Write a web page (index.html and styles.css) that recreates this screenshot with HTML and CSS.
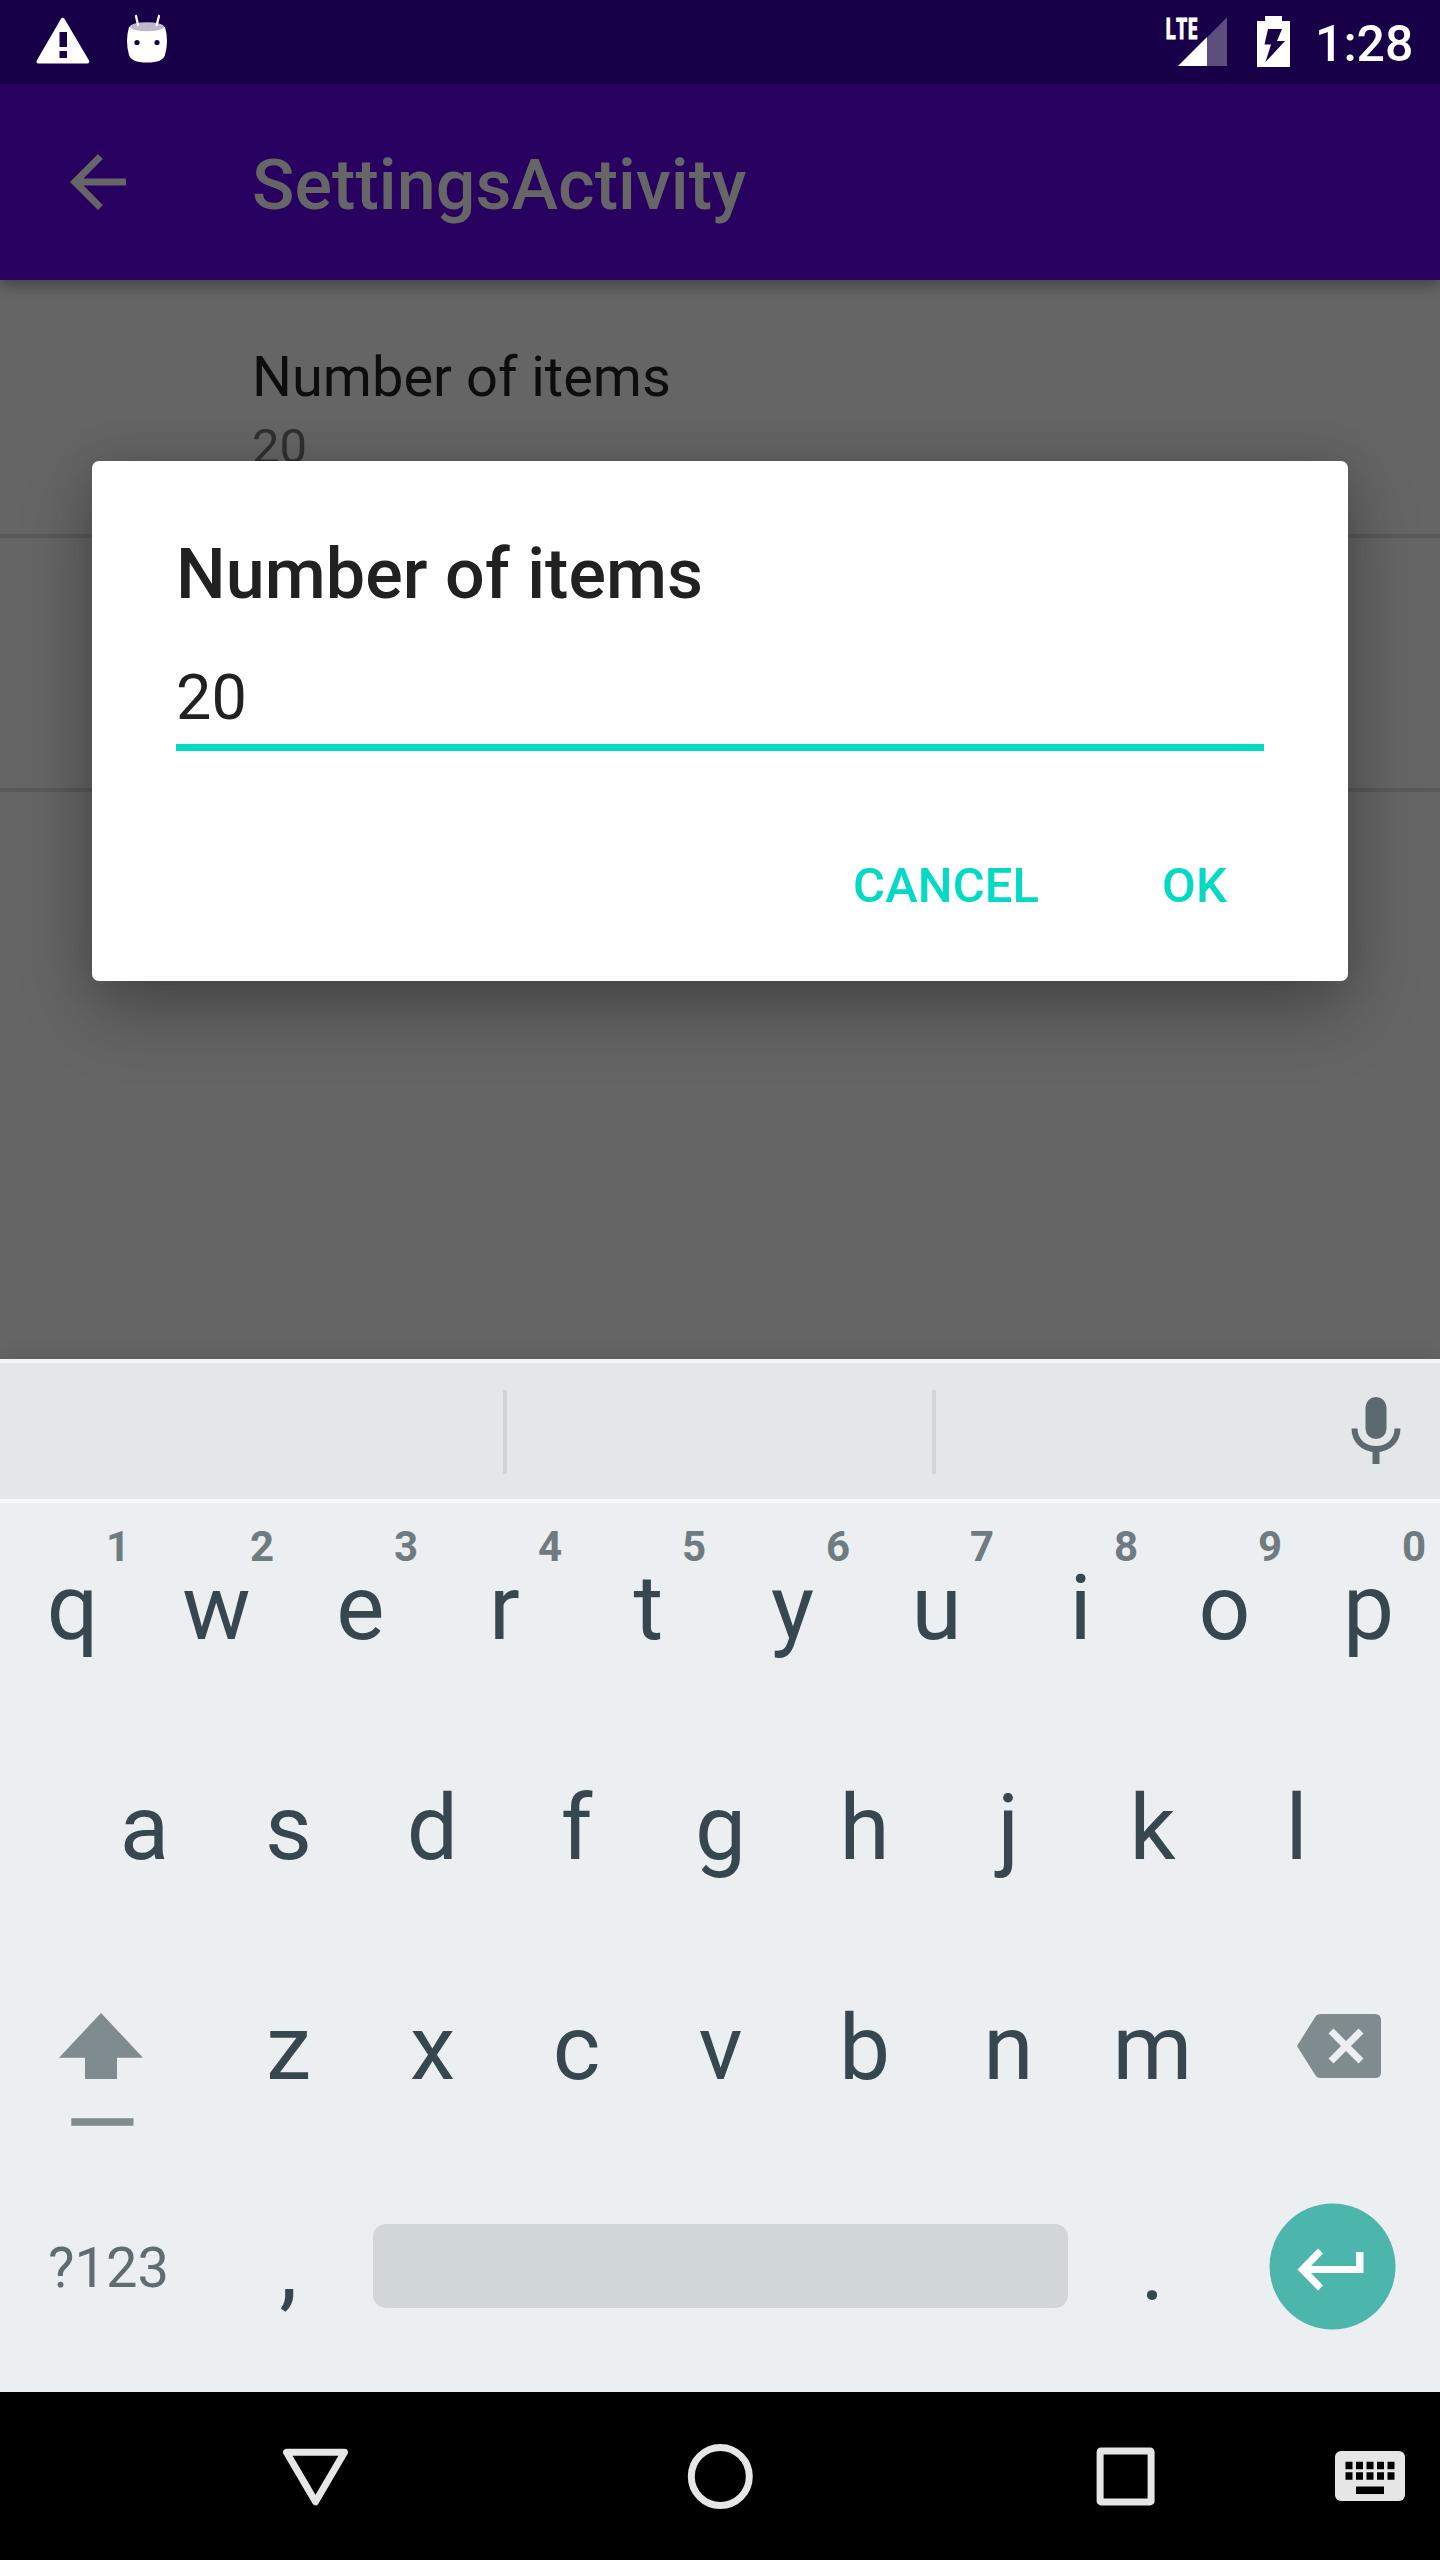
FILE: index.html
```
<!DOCTYPE html>
<html lang="en">
<head>
<meta charset="utf-8">
<title>SettingsActivity</title>
<link rel="stylesheet" href="styles.css">
</head>
<body>
<div class="screen">
  <header class="status">
    <div class="status-side">
      <svg class="warning" width="54" height="48" viewBox="0 0 54 48"><path fill="#fff" stroke="#fff" stroke-width="4" stroke-linejoin="round" d="M26.700 2.800 2.500 44.500H51.300Z"/><path fill="#180048" d="M23.500 15h7.500v15h-7.500zM23.500 34h7.500v7h-7.500z"/></svg>
      <svg class="droid" width="42" height="50" viewBox="0 0 42 50"><path fill="#fff" d="M3 13Q21 5 39 13Q43 27 39 41Q37 48.500 21 48.500T3 41Q-1 27 3 13Z"/><ellipse cx="21" cy="12.800" rx="17" ry="4.500" fill="#c0b9ce"/><path stroke="#fff" stroke-width="2.300" stroke-linecap="round" d="M10 2l2 9M33 2l-2.300 9"/><circle cx="11" cy="28.500" r="2.600" fill="#180048"/><circle cx="31" cy="28.500" r="2.600" fill="#180048"/></svg>
    </div>
    <div class="status-side">
      <div class="signal">
        <svg width="50" height="50" viewBox="0 0 50 50"><path fill="#5d4e7e" d="M29 20.500 49 .5V49H29Z"/><path fill="#fff" d="M0 49 29 20V49Z"/></svg>
        <span class="lte">LTE</span>
      </div>
      <svg class="battery" width="33" height="51" viewBox="0 0 33 51"><path fill="#fff" d="M8 0H25V5H33V51H0V5H8Z"/><path fill="#180048" d="M11 13H25L20 25H28L8.500 46 14 28.500H7.500Z"/></svg>
      <span class="clock">1:28</span>
    </div>
  </header>

  <div class="appbar">
    <svg class="back" width="56" height="56" viewBox="0 0 56 56"><path fill="#666" d="M56 24.500H13.500L32.800 4.900 28 0 0 28 28 56 32.800 51.100 13.500 31.500H56Z"/></svg>
    <h1 class="appbar-title">SettingsActivity</h1>
  </div>

  <main class="prefs">
    <div class="pref">
      <div class="pref-title">Number of items</div>
      <div class="pref-summary">20</div>
    </div>
    <div class="pref"></div>
  </main>

  <section class="dialog">
    <h2 class="dialog-title">Number of items</h2>
    <div class="field">20</div>
    <div class="actions"><span>CANCEL</span><span>OK</span></div>
  </section>

  <section class="keyboard">
    <div class="suggestions">
      <div class="slot first"></div>
      <div class="slot second"></div>
      <svg class="mic" width="50" height="68" viewBox="0 0 50 68"><rect x="14.500" y="0" width="21" height="42" rx="10.500" fill="#5c6a70"/><path fill="none" stroke="#5c6a70" stroke-width="6" d="M3.500 31.500C3.500 43 12 52 25 52S46.500 43 46.500 31.500"/><path fill="#5c6a70" d="M21.500 52h7v15h-7z"/></svg>
    </div>
    <div class="row">
      <div class="key">q<i>1</i></div><div class="key">w<i>2</i></div><div class="key">e<i>3</i></div><div class="key">r<i>4</i></div><div class="key">t<i>5</i></div><div class="key">y<i>6</i></div><div class="key">u<i>7</i></div><div class="key">i<i>8</i></div><div class="key">o<i>9</i></div><div class="key">p<i>0</i></div>
    </div>
    <div class="row">
      <div class="key">a</div><div class="key">s</div><div class="key">d</div><div class="key">f</div><div class="key">g</div><div class="key">h</div><div class="key">j</div><div class="key">k</div><div class="key">l</div>
    </div>
    <div class="row">
      <div class="key wide shift"><svg width="84" height="114" viewBox="0 0 84 114"><path fill="#808b8f" d="M42 0 84 44.700H58V66H26V44.700H0ZM12.300 105.300H74.500V112.700H12.300Z"/></svg></div>
      <div class="key">z</div><div class="key">x</div><div class="key">c</div><div class="key">v</div><div class="key">b</div><div class="key">n</div><div class="key">m</div>
      <div class="key wide delete"><svg width="84" height="64" viewBox="0 0 84 64"><path fill="#808b8f" d="M0 32 18.500 2.500Q20 0 24 0H78Q84 0 84 6V58Q84 64 78 64H24Q20 64 18.500 61.500Z"/><path stroke="#eceff1" stroke-width="7" d="M34 17 64 47M64 17 34 47"/></svg></div>
    </div>
    <div class="row">
      <div class="key wide symbols">?123</div>
      <div class="key">,</div>
      <div class="space"></div>
      <div class="key">.</div>
      <div class="key wide enter"><svg width="127" height="127" viewBox="-.5 0 127 127"><circle cx="63" cy="63.500" r="63" fill="#4db6ac"/><path fill="#fff" d="M86.500 49H94V70H41.500L53.500 82.500 48.500 87.500 28 66.500 48.500 45.500 53.500 50.500 41.500 63H86.500Z"/></svg></div>
    </div>
  </section>

  <nav class="navbar">
    <svg class="nav-back" width="66" height="58" viewBox="-.5 -.3 66 58"><path fill="none" stroke="#e6e6e6" stroke-width="7" stroke-linejoin="round" d="M4 4H62L33 53.500Z"/></svg>
    <svg class="nav-home" width="66" height="66" viewBox="-.3 -.4 66 66"><circle cx="33" cy="33" r="29" fill="none" stroke="#e6e6e6" stroke-width="7"/></svg>
    <svg class="nav-recent" width="60" height="60" viewBox="-.6 -.4 60 60"><rect x="4.500" y="4.500" width="51" height="51" rx="1" fill="none" stroke="#e6e6e6" stroke-width="7" stroke-linejoin="round"/></svg>
    <svg class="nav-ime" width="70" height="50" viewBox="0 0 70 50"><rect width="70" height="50" rx="6" fill="#e6e6e6"/><path stroke="#000" stroke-width="7.500" stroke-dasharray="7 3.500" d="M10.500 14.500H60M10.500 25H60"/><path fill="#000" d="M21 35.500H49V43H21Z"/></svg>
  </nav>
</div>
</body>
</html>
```
FILE: styles.css
```
* { box-sizing: border-box; }
body { margin: 0; font-family: Roboto, "Liberation Sans", sans-serif; }
h1, h2 { margin: 0; font-weight: 500; }
svg { display: block; flex: none; }

.screen {
  position: relative;
  width: 1440px;
  height: 2560px;
  display: flex;
  flex-direction: column;
  overflow: hidden;
  background: #656565;
}

.status {
  height: 84px;
  flex: none;
  display: flex;
  justify-content: space-between;
  background: #180048;
  color: #fff;
}
.status-side { display: flex; align-items: flex-start; }
.warning { margin: 17px 0 0 36px; }
.droid { margin: 14px 0 0 36px; }
.signal { position: relative; margin-top: 17px; }
.lte {
  position: absolute;
  left: -13px;
  top: -5px;
  font: 700 29px/32px "Open Sans", Roboto, sans-serif;
  -webkit-text-stroke: .8px #fff;
  transform: scaleX(.67);
  transform-origin: left;
}
.battery { margin: 16px 0 0 29px; }
.clock {
  width: 150px;
  margin-top: 15px;
  padding-left: 25px;
  font-size: 50px;
  line-height: 58px;
  font-weight: 500;
  white-space: nowrap;
}

.appbar {
  position: relative;
  height: 196px;
  flex: none;
  display: flex;
  background: #280060;
  color: #666;
  box-shadow: 0 5px 14px rgba(0, 0, 0, .35);
}
.back { margin: 70px 126px 0 70px; }
.appbar-title { padding-top: 60px; font-size: 70px; line-height: 82px; letter-spacing: .07px; }

.prefs { height: 1079px; flex: none; }
.pref {
  height: 254px;
  padding: 59px 0 0 252px;
  border-bottom: 4px solid #595959;
}
.pref:first-child { height: 258px; }
.pref-title { font-size: 56px; line-height: 76px; color: #0d0d0d; }
.pref-summary { font-size: 49px; line-height: 64px; color: #303030; }

.dialog {
  position: absolute;
  left: 92px;
  top: 461px;
  width: 1256px;
  height: 520px;
  padding: 71px 84px 0;
  border-radius: 7px;
  background: #fff;
  color: #212121;
  box-shadow: 0 30px 70px rgba(0, 0, 0, .28), 0 0 45px rgba(0, 0, 0, .12);
}
.dialog-title { font-size: 70px; line-height: 84px; letter-spacing: .08px; }
.field {
  height: 135px;
  padding-top: 45px;
  border-bottom: 7px solid #03dac6;
  font-size: 63px;
  line-height: 74px;
}
.actions {
  display: flex;
  justify-content: flex-end;
  gap: 123px;
  padding: 105px 37px 0 0;
  font-size: 49px;
  line-height: 60px;
  font-weight: 500;
  letter-spacing: .1px;
  color: #03dac6;
}

.keyboard {
  position: relative;
  height: 1033px;
  flex: none;
  background: #eceff1;
  color: #37474f;
  box-shadow: 0 0 20px rgba(0, 0, 0, .1);
}
.suggestions {
  height: 144px;
  display: flex;
  border-top: 4px solid #f3f4f5;
  border-bottom: 4px solid #f5f7f8;
  background: #e3e7e9;
}
.slot { height: 84px; margin-top: 27px; border-right: 4px solid #cfd4d7; }
.first { width: 507px; }
.second { width: 429px; }
.mic { margin: 34px 0 0 415px; }
.row { height: 220px; display: flex; justify-content: center; }
.key {
  position: relative;
  width: 144px;
  padding: 50px 0 0 1px;
  font-size: 91px;
  line-height: 110px;
  text-align: center;
}
.key i {
  position: absolute;
  right: 14px;
  top: 19px;
  font: 700 42px/50px Roboto, sans-serif;
  color: #6e7b80;
}
.wide { width: 216px; }
.shift { padding: 70px 0 0 59px; }
.delete { padding: 71px 0 0 73px; }
.symbols { padding-top: 72px; font-size: 56px; line-height: 66px; color: #5f6c72; }
.space {
  width: 695px;
  height: 84px;
  margin: 61px 12px 0 13px;
  border-radius: 13px;
  background: #d1d6d9;
}
.enter { padding: 40px 0 0 45px; }

.navbar { height: 168px; flex: none; display: flex; background: #000; }
.nav-back { margin: 56px 0 0 282px; }
.nav-home { margin: 51px 0 0 339px; }
.nav-recent { margin: 54px 0 0 342px; }
.nav-ime { margin: 59px 0 0 180px; }
```
